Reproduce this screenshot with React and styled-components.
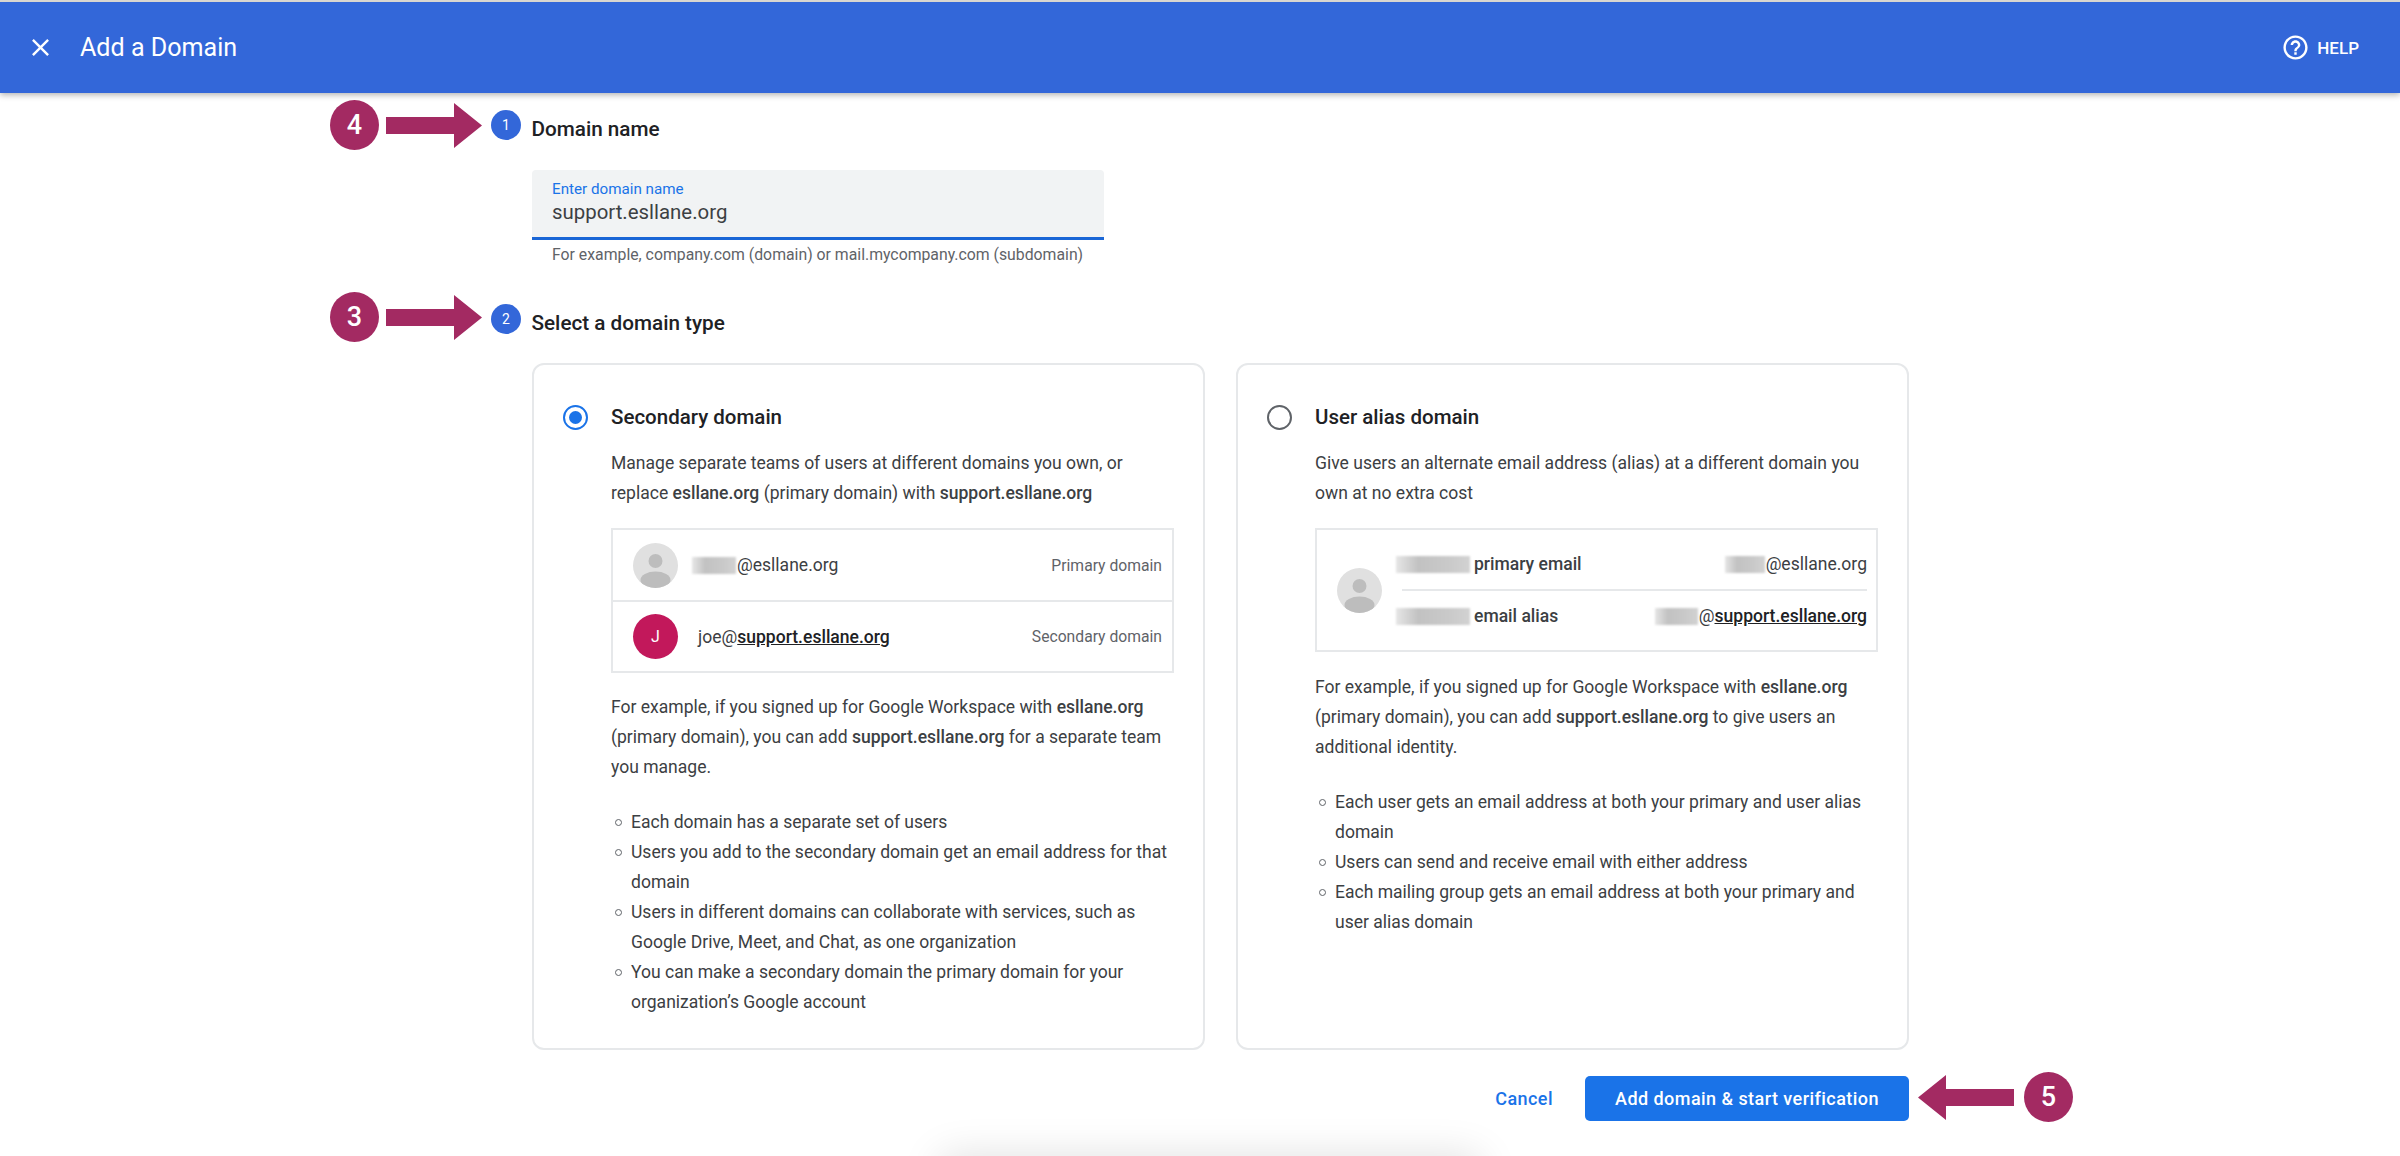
import React from 'react';
import styled, { createGlobalStyle } from 'styled-components';

const GlobalStyle = createGlobalStyle`
  html, body {
    margin: 0;
    padding: 0;
    background: #fff;
  }
  body {
    font-family: Roboto, "Liberation Sans", sans-serif;
    color: #3c4043;
  }
`;

const Page = styled.div`
  position: relative;
  width: 2400px;
  height: 1156px;
  overflow: hidden;
  background: #fff;
  border-top: 2px solid #d9d6d0;
  box-sizing: border-box;
`;

const Header = styled.header`
  height: 91px;
  background: #3367d9;
  color: #fff;
  display: flex;
  align-items: center;
  justify-content: space-between;
  padding: 0 41px 0 26px;
  box-shadow: 0 2px 6px rgba(0, 0, 0, 0.3);
`;

const HeaderLeft = styled.div`
  display: flex;
  align-items: center;
  gap: 25px;
`;

const HeaderTitle = styled.h1`
  margin: 0;
  font-size: 25.1px;
  font-weight: 400;
`;

const HelpLink = styled.div`
  display: flex;
  align-items: center;
  gap: 7px;
  font-size: 17px;
  font-weight: 500;
`;

const Main = styled.main`
  padding: 17px 0 0 491px;
  width: 1418px;
`;

const StepHead = styled.div`
  position: relative;
  display: flex;
  align-items: flex-start;
  gap: 10.5px;
  height: 40px;
  margin-top: ${props => props.$top || 0}px;
`;

const StepDot = styled.span`
  width: 30px;
  height: 30px;
  border-radius: 50%;
  background: #3367d9;
  color: #fff;
  font-size: 14px;
  display: flex;
  align-items: center;
  justify-content: center;
`;

const StepTitle = styled.h2`
  margin: 7px 0 0;
  font-size: 20.7px;
  line-height: 24px;
  font-weight: 500;
  color: #202124;
`;

const Callout = styled.div`
  position: absolute;
  display: flex;
  align-items: center;
  gap: 7px;
  left: -161px;
  top: ${props => props.$top}px;
`;

const CalloutBadge = styled.span`
  width: 49px;
  height: 50px;
  border-radius: 50%;
  background: #a32a62;
  color: #fff;
  font-size: 27px;
  font-weight: 500;
  display: flex;
  align-items: center;
  justify-content: center;
`;

const StepBody = styled.div`
  margin-left: 41px;
`;

const Field = styled.div`
  width: 572px;
  height: 70px;
  margin-top: 20px;
  box-sizing: border-box;
  background: #f1f3f4;
  border-bottom: 3px solid #1a66d6;
  border-radius: 4px 4px 0 0;
  padding: 10px 20px 0;
`;

const FieldLabel = styled.div`
  font-size: 15.2px;
  line-height: 18px;
  color: #1a73e8;
`;

const FieldValue = styled.div`
  font-size: 20.4px;
  line-height: 28px;
  color: #3c4043;
`;

const FieldHint = styled.div`
  margin: 5px 0 0 20px;
  font-size: 15.8px;
  line-height: 20px;
  color: #5f6368;
`;

const Cards = styled.div`
  display: grid;
  grid-template-columns: 673px 673px;
  gap: 31px;
  margin-top: 19px;
`;

const Card = styled.section`
  height: 687px;
  box-sizing: border-box;
  border: 2px solid #e6e8ea;
  border-radius: 12px;
  padding: 39px 29px 0;
`;

const CardHead = styled.div`
  display: flex;
  align-items: center;
  gap: 23px;
  height: 26px;
`;

const Radio = styled.span`
  width: 25px;
  height: 25px;
  box-sizing: border-box;
  border-radius: 50%;
  border: 2.5px solid ${props => (props.$checked ? '#1a73e8' : '#5f6368')};
  display: flex;
  align-items: center;
  justify-content: center;

  &::after {
    content: '';
    display: ${props => (props.$checked ? 'block' : 'none')};
    width: 13px;
    height: 13px;
    border-radius: 50%;
    background: #1a73e8;
  }
`;

const CardTitle = styled.h3`
  margin: 0;
  font-size: 20.5px;
  font-weight: 500;
  color: #202124;
`;

const CardBody = styled.div`
  margin-left: 48px;
`;

const Para = styled.p`
  margin: ${props => props.$top || 0}px 0 0;
  font-size: 17.55px;
  line-height: 30px;
  color: #3c4043;

  strong {
    font-weight: 500;
  }
`;

const Demo = styled.div`
  margin-top: 20px;
  border: 2px solid #e6e8ea;
`;

const DemoRow = styled.div`
  display: flex;
  align-items: center;
  height: 70px;
  padding: 0 10px 0 20px;

  & + & {
    height: 69px;
    border-top: 2px solid #e6e8ea;
  }
`;

const Account = styled.span`
  margin-left: 20px;
  flex: 1;
  font-size: 17.55px;
  display: flex;
  align-items: center;
`;

const Tag = styled.span`
  font-size: 15.7px;
  color: #5f6368;
`;

const Domain = styled.span`
  color: #202124;
  font-weight: 500;
  text-decoration: underline;
`;

// pixelated-out name, soft inside but with a hard crop like the original
const Blur = styled.span`
  flex: none;
  width: ${props => props.$w}px;
  height: 17px;
  margin: 0 ${props => props.$gap}px 0 -6px;
  background: linear-gradient(90deg, #e6e6e6, #c2c2c2 30%, #c9c9c9 70%, #d2d2d2);
  filter: blur(1px);
`;

const Initial = styled.span`
  width: 45px;
  height: 45px;
  border-radius: 50%;
  background: #c2185b;
  color: #fff;
  font-size: 16px;
  flex: none;
  display: flex;
  align-items: center;
  justify-content: center;
`;

const AliasDemo = styled(Demo)`
  display: flex;
  align-items: center;
  height: 124px;
  box-sizing: border-box;
  padding: 0 9px 0 20px;
`;

const AliasLines = styled.div`
  flex: 1;
  margin-left: 20px;
`;

const AliasLine = styled.div`
  display: flex;
  align-items: center;
  justify-content: space-between;
  height: 24px;
  font-size: 17.55px;
`;

const AliasRule = styled.div`
  height: 2px;
  background: #e6e8ea;
  margin: 13px 0;
`;

const Who = styled.span`
  display: flex;
  align-items: center;
  font-weight: 500;
  color: #3c4043;
`;

const Address = styled.span`
  display: flex;
  align-items: center;
`;

const BulletList = styled.ul`
  margin: ${props => props.$top}px 0 0;
  padding: 0 0 0 20px;
  list-style: none;
  font-size: 17.55px;
  line-height: 30px;
  color: #3c4043;

  li {
    position: relative;
  }

  li::before {
    content: '';
    position: absolute;
    left: -16px;
    top: 12px;
    width: 7px;
    height: 7px;
    box-sizing: border-box;
    border: 1px solid #5f6368;
    border-radius: 50%;
  }
`;

const Footer = styled.div`
  display: flex;
  justify-content: flex-end;
  align-items: center;
  gap: 32px;
  margin-top: 26px;
`;

const CancelButton = styled.button`
  border: 0;
  background: none;
  padding: 0;
  font: 500 18px Roboto, sans-serif;
  letter-spacing: 0.45px;
  color: #1a73e8;
`;

const PrimaryButton = styled.button`
  position: relative;
  width: 324px;
  height: 45px;
  border: 0;
  border-radius: 5px;
  background: #1a73e8;
  color: #fff;
  font: 500 18px Roboto, sans-serif;
  letter-spacing: 0.45px;
`;

const CalloutLeft = styled.div`
  position: absolute;
  left: 333px;
  top: -4px;
  display: flex;
  align-items: center;
  gap: 10px;
  letter-spacing: 0;
`;

// shadow of something sitting just under the fold
const BottomShade = styled.div`
  position: absolute;
  left: 940px;
  top: 100%;
  width: 540px;
  height: 40px;
  border-radius: 8px;
  box-shadow: 0 0 40px rgba(0, 0, 0, 0.13);
`;

const CloseIcon = () => (
  <svg width="29" height="29" viewBox="0 0 24 24" fill="#fff">
    <path d="M19 6.41L17.59 5 12 10.59 6.41 5 5 6.41 10.59 12 5 17.59 6.41 19 12 13.41 17.59 19 19 17.59 13.41 12z" />
  </svg>
);

const HelpIcon = () => (
  <svg width="29" height="29" viewBox="0 0 24 24" fill="#fff">
    <path d="M11 18h2v-2h-2v2zm1-16C6.48 2 2 6.48 2 12s4.48 10 10 10 10-4.48 10-10S17.52 2 12 2zm0 18c-4.41 0-8-3.59-8-8s3.59-8 8-8 8 3.59 8 8-3.59 8-8 8zm0-14c-2.21 0-4 1.79-4 4h2c0-1.1.9-2 2-2s2 .9 2 2c0 2-3 1.75-3 5h2c0-2.25 3-2.5 3-5 0-2.21-1.79-4-4-4z" />
  </svg>
);

const ArrowRight = () => (
  <svg width="96" height="45" viewBox="0 0 96 45" fill="#a32a62">
    <polygon points="0,14 68,14 68,0 96,22.5 68,45 68,31 0,31" />
  </svg>
);

const ArrowLeft = () => (
  <svg width="96" height="45" viewBox="0 0 96 45" fill="#a32a62">
    <polygon points="96,14 28,14 28,0 0,22.5 28,45 28,31 96,31" />
  </svg>
);

const AvatarSvg = styled.svg`
  flex: none;
`;

const PersonAvatar = ({ id }) => (
  <AvatarSvg width="45" height="45" viewBox="0 0 45 45">
    <clipPath id={id}>
      <circle cx="22.5" cy="22.5" r="22.5" />
    </clipPath>
    <g clipPath={`url(#${id})`}>
      <rect width="45" height="45" fill="#e0e0e0" />
      <circle cx="22.5" cy="18" r="7" fill="#bdbdbd" />
      <ellipse cx="22.5" cy="37" rx="15" ry="8.5" fill="#bdbdbd" />
    </g>
  </AvatarSvg>
);

export default function App() {
  return (
    <>
      <GlobalStyle />
      <Page>
        <Header>
          <HeaderLeft>
            <CloseIcon />
            <HeaderTitle>Add a Domain</HeaderTitle>
          </HeaderLeft>
          <HelpLink>
            <HelpIcon />
            HELP
          </HelpLink>
        </Header>
        <Main>
          <StepHead>
            <Callout $top={-10}>
              <CalloutBadge>4</CalloutBadge>
              <ArrowRight />
            </Callout>
            <StepDot>1</StepDot>
            <StepTitle>Domain name</StepTitle>
          </StepHead>
          <StepBody>
            <Field>
              <FieldLabel>Enter domain name</FieldLabel>
              <FieldValue>support.esllane.org</FieldValue>
            </Field>
            <FieldHint>For example, company.com (domain) or mail.mycompany.com (subdomain)</FieldHint>
          </StepBody>
          <StepHead $top={39}>
            <Callout $top={-12}>
              <CalloutBadge>3</CalloutBadge>
              <ArrowRight />
            </Callout>
            <StepDot>2</StepDot>
            <StepTitle>Select a domain type</StepTitle>
          </StepHead>
          <StepBody>
            <Cards>
              <Card>
                <CardHead>
                  <Radio $checked />
                  <CardTitle>Secondary domain</CardTitle>
                </CardHead>
                <CardBody>
                  <Para $top={18}>
                    Manage separate teams of users at different domains you own, or replace <strong>esllane.org</strong> (primary domain) with <strong>support.esllane.org</strong>
                  </Para>
                  <Demo>
                    <DemoRow>
                      <PersonAvatar id="avatar-a" />
                      <Account>
                        <Blur $w={44} $gap={1} />@esllane.org
                      </Account>
                      <Tag>Primary domain</Tag>
                    </DemoRow>
                    <DemoRow>
                      <Initial>J</Initial>
                      <Account>
                        <span>joe@<Domain>support.esllane.org</Domain></span>
                      </Account>
                      <Tag>Secondary domain</Tag>
                    </DemoRow>
                  </Demo>
                  <Para $top={19}>
                    For example, if you signed up for Google Workspace with <strong>esllane.org</strong> (primary domain), you can add <strong>support.esllane.org</strong> for a separate team you manage.
                  </Para>
                  <BulletList $top={25}>
                    <li>Each domain has a separate set of users</li>
                    <li>Users you add to the secondary domain get an email address for that domain</li>
                    <li>Users in different domains can collaborate with services, such as Google Drive, Meet, and Chat, as one organization</li>
                    <li>You can make a secondary domain the primary domain for your organization’s Google account</li>
                  </BulletList>
                </CardBody>
              </Card>
              <Card>
                <CardHead>
                  <Radio />
                  <CardTitle>User alias domain</CardTitle>
                </CardHead>
                <CardBody>
                  <Para $top={18}>
                    Give users an alternate email address (alias) at a different domain you own at no extra cost
                  </Para>
                  <AliasDemo>
                    <PersonAvatar id="avatar-b" />
                    <AliasLines>
                      <AliasLine>
                        <Who><Blur $w={74} $gap={4} />primary email</Who>
                        <Address><Blur $w={40} $gap={1} />@esllane.org</Address>
                      </AliasLine>
                      <AliasRule />
                      <AliasLine>
                        <Who><Blur $w={74} $gap={4} />email alias</Who>
                        <Address><Blur $w={43} $gap={1} />@<Domain>support.esllane.org</Domain></Address>
                      </AliasLine>
                    </AliasLines>
                  </AliasDemo>
                  <Para $top={20}>
                    For example, if you signed up for Google Workspace with <strong>esllane.org</strong> (primary domain), you can add <strong>support.esllane.org</strong> to give users an additional identity.
                  </Para>
                  <BulletList $top={25}>
                    <li>Each user gets an email address at both your primary and user alias domain</li>
                    <li>Users can send and receive email with either address</li>
                    <li>Each mailing group gets an email address at both your primary and user alias domain</li>
                  </BulletList>
                </CardBody>
              </Card>
            </Cards>
            <Footer>
              <CancelButton>Cancel</CancelButton>
              <PrimaryButton>
                Add domain &amp; start verification
                <CalloutLeft>
                  <ArrowLeft />
                  <CalloutBadge>5</CalloutBadge>
                </CalloutLeft>
              </PrimaryButton>
            </Footer>
          </StepBody>
        </Main>
        <BottomShade />
      </Page>
    </>
  );
}
